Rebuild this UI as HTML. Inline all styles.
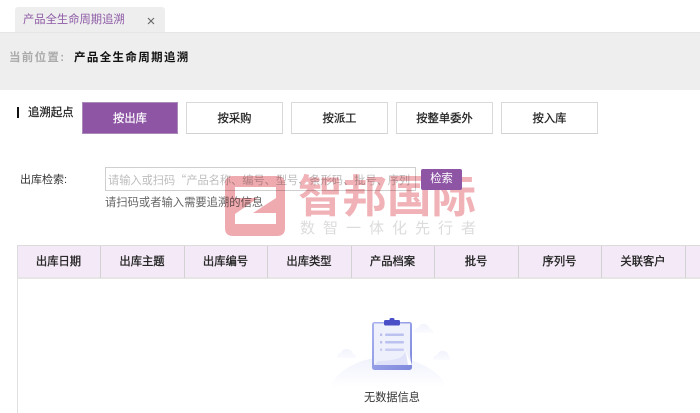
<!DOCTYPE html>
<html lang="zh">
<head>
<meta charset="utf-8">
<style>
html,body{margin:0;padding:0;width:700px;height:413px;overflow:hidden;background:#fff}
body{position:relative;font-family:"Liberation Sans","Noto Sans CJK SC",sans-serif;font-size:11px;color:#222}
#w{position:absolute;left:0;top:0;width:700px;height:413px;overflow:hidden;filter:blur(.3px);background:#fff}
.a{position:absolute;white-space:nowrap}
.btn{position:absolute;top:102px;height:32px;box-sizing:border-box;border:1px solid #d9d9d9;border-bottom-color:#d2d2d2;text-align:center;line-height:32px;font-size:11.3px;color:#222;background:#fff;-webkit-text-stroke:.25px #222}
.th{position:absolute;top:246px;height:32px;box-sizing:border-box;border-right:1px solid #d2d2d2;text-align:center;line-height:33px;font-size:11.3px;color:#222;-webkit-text-stroke:.3px #222;padding-right:1px}
</style>
</head>
<body>
<div id="w">
<!-- tab bar -->
<div class="a" style="left:15px;top:7px;width:150px;height:25px;background:#eeeeee;border-radius:3px 3px 0 0"></div>
<div class="a" style="left:23px;top:12px;font-size:11.3px;line-height:16px;color:#8e5ba6">产品全生命周期追溯</div>
<svg class="a" style="left:147px;top:17px" width="8" height="8" viewBox="0 0 8 8"><path d="M1 1L7 7M7 1L1 7" stroke="#666" stroke-width="1.1"/></svg>
<!-- breadcrumb -->
<div class="a" style="left:0;top:32px;width:700px;height:58px;background:#eeeeee;border-top:1px solid #e6e6e6;box-sizing:border-box"></div>
<div class="a" style="left:9px;top:50px;font-size:11.5px;line-height:16px;letter-spacing:1.3px;color:#aaa;font-weight:bold">当前位置:</div>
<div class="a" style="left:74px;top:50px;font-size:11.5px;line-height:16px;letter-spacing:1.35px;color:#111;font-weight:bold">产品全生命周期追溯</div>
<!-- start row -->
<div class="a" style="left:17px;top:107px;width:2px;height:11px;background:#111"></div>
<div class="a" style="left:28px;top:105px;font-size:11.4px;line-height:16px;color:#222;-webkit-text-stroke:.25px #222">追溯起点</div>
<div class="btn" style="left:82px;width:96px;background:#8e55a5;border-color:#a98ab8;color:#fff;-webkit-text-stroke:.2px #fff">按出库</div>
<div class="btn" style="left:186px;width:97px">按采购</div>
<div class="btn" style="left:291px;width:97px">按派工</div>
<div class="btn" style="left:396px;width:97px">按整单委外</div>
<div class="btn" style="left:501px;width:97px">按入库</div>
<!-- search -->
<div class="a" style="left:20px;top:172px;font-size:11px;line-height:16px;color:#333">出库检索:</div>
<div class="a" style="left:105px;top:167px;width:311px;height:24px;box-sizing:border-box;border:1px solid #cfcfcf;background:#fff"></div>
<div class="a" style="left:108px;top:172px;width:306px;overflow:hidden;font-family:'Noto Sans CJK SC',sans-serif;font-size:11.2px;line-height:16px;color:#bdbdbd">请输入或扫码“产品名称、编号、型号、条形码、批号、序列</div>
<div class="a" style="left:105px;top:195px;font-size:11.3px;line-height:16px;color:#666">请扫码或者输入需要追溯的信息</div>
<!-- table -->
<div class="a" style="left:17px;top:245px;width:683px;height:34px;box-sizing:border-box;background:#f4eaf7;border-top:1px solid #dcdcdc;border-bottom:2px solid #e6e6e6;border-left:1px solid #dcdcdc"></div>
<div class="a" style="left:17px;top:279px;width:1px;height:134px;background:#e0e0e0"></div>
<div class="th" style="left:18px;width:83px">出库日期</div>
<div class="th" style="left:101px;width:84px">出库主题</div>
<div class="th" style="left:185px;width:83px">出库编号</div>
<div class="th" style="left:268px;width:84px">出库类型</div>
<div class="th" style="left:352px;width:83px">产品档案</div>
<div class="th" style="left:435px;width:84px">批号</div>
<div class="th" style="left:519px;width:83px">序列号</div>
<div class="th" style="left:602px;width:84px">关联客户</div>
<!-- empty state -->
<svg class="a" style="left:325px;top:315px" width="125" height="78" viewBox="0 0 125 78">
<defs>
<linearGradient id="h" x1="0" y1="0" x2="0" y2="1"><stop offset="0" stop-color="#f0f2fc"/><stop offset="1" stop-color="#ffffff"/></linearGradient>
<linearGradient id="c" x1="0" y1="0" x2="0" y2="1"><stop offset="0" stop-color="#f2f3fc"/><stop offset="1" stop-color="#fbfbff"/></linearGradient>
<linearGradient id="p" x1="0" y1="0" x2="1" y2="1"><stop offset="0" stop-color="#a9b2ef"/><stop offset="1" stop-color="#7e88dc"/></linearGradient>
</defs>
<path d="M5 72C12 54 38 42 62 42C88 42 114 54 122 72Z" fill="url(#h)"/>
<path d="M12 43q0-5 4-5q2-5 7-4q4 1 5 5q3 0 3 4Z" fill="url(#c)"/>
<path d="M89 18q0-5 4-5q2-5 7-4q4 1 5 5q3 0 3 4Z" fill="url(#c)"/>
<path d="M108 45q0-5 4-5q2-5 7-4q4 1 5 5q1 0 1 4Z" fill="url(#c)"/>
<rect x="47" y="7" width="40" height="48" rx="2.500" fill="url(#p)"/>
<path d="M49 8.500H85V39Q85.500 47 87 50H50Q49 50 49 49Z" fill="#eef0fb"/>
<path d="M50 50H84L80 37Q78 46 53 46Q51 48 50 50Z" fill="#dfe2f8"/>
<path d="M83 50L80 31Q82 42 86.500 48L86 50Z" fill="#fff"/>
<rect x="59" y="5" width="16" height="5.500" rx="1.500" fill="#4a4fc8"/>
<rect x="64.500" y="3" width="5" height="3" rx="1.500" fill="#4a4fc8"/>
<rect x="55" y="18.500" width="2.200" height="2.500" fill="#b9bfef"/><rect x="60" y="18.500" width="19" height="2.500" rx="1" fill="#bcc2ef"/>
<rect x="55" y="26" width="2.200" height="2.500" fill="#b9bfef"/><rect x="60" y="26" width="19" height="2.500" rx="1" fill="#bcc2ef"/>
<rect x="55" y="33.500" width="2.200" height="2.500" fill="#c8ccf2"/><rect x="60" y="33.500" width="19" height="2.500" rx="1" fill="#c8ccf2"/>
</svg>
<div class="a" style="left:364px;top:390px;font-size:11.2px;line-height:16px;color:#333">无数据信息</div>
<!-- watermark -->
<svg class="a" style="left:225px;top:176px;mix-blend-mode:multiply" width="60" height="60" viewBox="0 0 60 60">
<path fill-rule="evenodd" fill="#eeaaae" d="M8 0H52Q60 0 60 8V52Q60 60 52 60H8Q0 60 0 52V8Q0 0 8 0ZM10 11V22H33L10 38V48H51V37H28L51 22V11Z"/>
</svg>
<div class="a" style="left:298px;top:168px;width:182px;font-size:44.5px;line-height:60px;color:#f0b2b6;font-weight:bold;mix-blend-mode:multiply">智邦国际</div>
<div class="a" style="left:300px;top:219px;font-size:15px;line-height:20px;letter-spacing:8px;color:#dcdcdc;mix-blend-mode:multiply">数智一体化先行者</div>
<div class="a" style="left:421px;top:169px;width:41px;height:21px;background:#8e55a5;border-radius:2px;color:#fff;text-align:center;line-height:21px;font-size:11.3px">检索</div>
</div>
</body>
</html>
